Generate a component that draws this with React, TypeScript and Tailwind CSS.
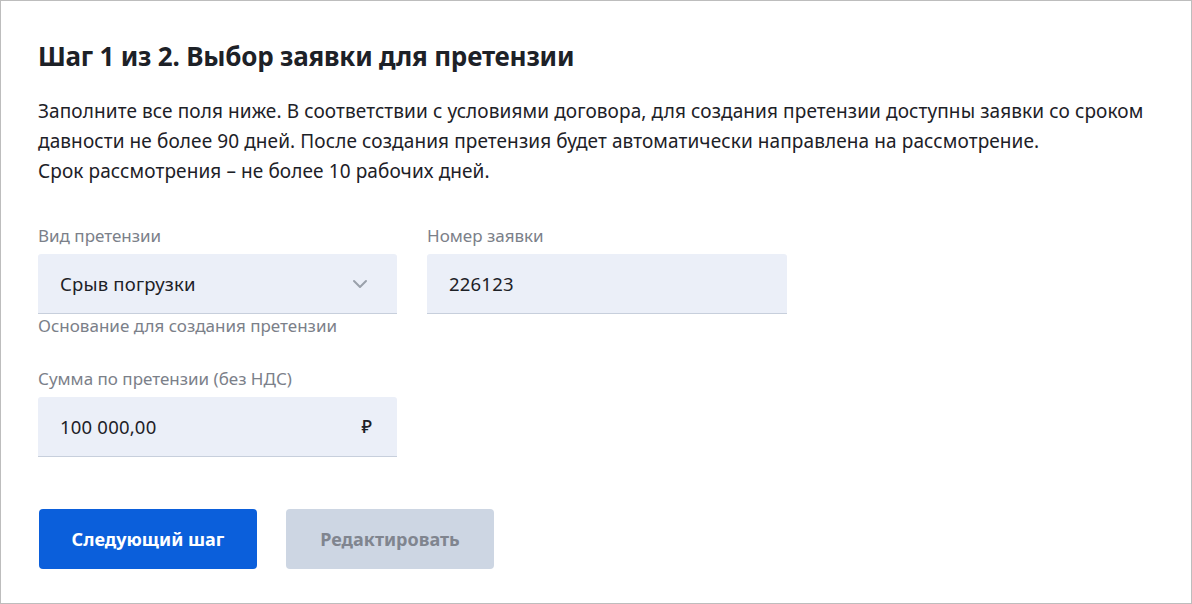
import React from "react";

const font = { fontFamily: '"Noto Sans", "Open Sans", sans-serif' };

function Field({
  label,
  value,
  suffix,
  hint,
}: {
  label: string;
  value: string;
  suffix?: React.ReactNode;
  hint?: string;
}) {
  return (
    <div className="flex flex-col">
      <div className="text-[17px] leading-[20px] text-[#7b8089] mb-[8px]">{label}</div>
      <div className="h-[60px] flex items-center justify-between pl-[22px] pr-[25px] bg-[#ebeff8] rounded-t-[3px] border-b border-[#c7cfdc]">
        <span className="text-[18.5px] text-[#1d2127] tracking-[0.2px]">{value}</span>
        {suffix}
      </div>
      {hint && <div className="text-[17px] leading-[20px] text-[#7b8089] mt-[2px]">{hint}</div>}
    </div>
  );
}

export default function App() {
  return (
    <div style={font} className="w-[1192px] h-[604px] bg-white border border-[#bdbdbd] pl-[37px] pt-[37px]">
      <h1 className="text-[26px] leading-[36px] font-bold text-[#1d2127] tracking-[-0.2px]">
        Шаг 1 из 2. Выбор заявки для претензии
      </h1>
      <p className="mt-[22px] text-[19px] leading-[30px] text-[#1d2127] tracking-[0.1px] w-[1130px]">
        Заполните все поля ниже. В соответствии с условиями договора, для создания претензии доступны заявки со сроком
        давности не более 90 дней. После создания претензия будет автоматически направлена на рассмотрение.
        <br />
        Срок рассмотрения – не более 10 рабочих дней.
      </p>

      <div className="mt-[40px] grid grid-cols-[359px_360px] gap-x-[30px]">
        <Field
          label="Вид претензии"
          value="Срыв погрузки"
          hint="Основание для создания претензии"
          suffix={
            <svg width="16" height="10" viewBox="0 0 16 10" fill="none" className="mr-[4px]">
              <path d="M2 2l6 6 6-6" stroke="#9aa1ab" strokeWidth="2" strokeLinecap="round" strokeLinejoin="round" />
            </svg>
          }
        />
        <Field label="Номер заявки" value="226123" />
      </div>

      <div className="mt-[33px] w-[359px]">
        <Field
          label="Сумма по претензии (без НДС)"
          value="100 000,00"
          suffix={<span className="text-[18px] font-medium text-[#1d2127]">₽</span>}
        />
      </div>

      <div className="mt-[52px] flex gap-[29px] pl-[1px]">
        <button className="w-[218px] h-[60px] rounded-[4px] bg-[#0b5fdb] text-white text-[18px] font-bold">
          Следующий шаг
        </button>
        <button className="w-[208px] h-[60px] rounded-[4px] bg-[#cdd6e3] text-[#80858f] text-[18px] font-bold">
          Редактировать
        </button>
      </div>
    </div>
  );
}
